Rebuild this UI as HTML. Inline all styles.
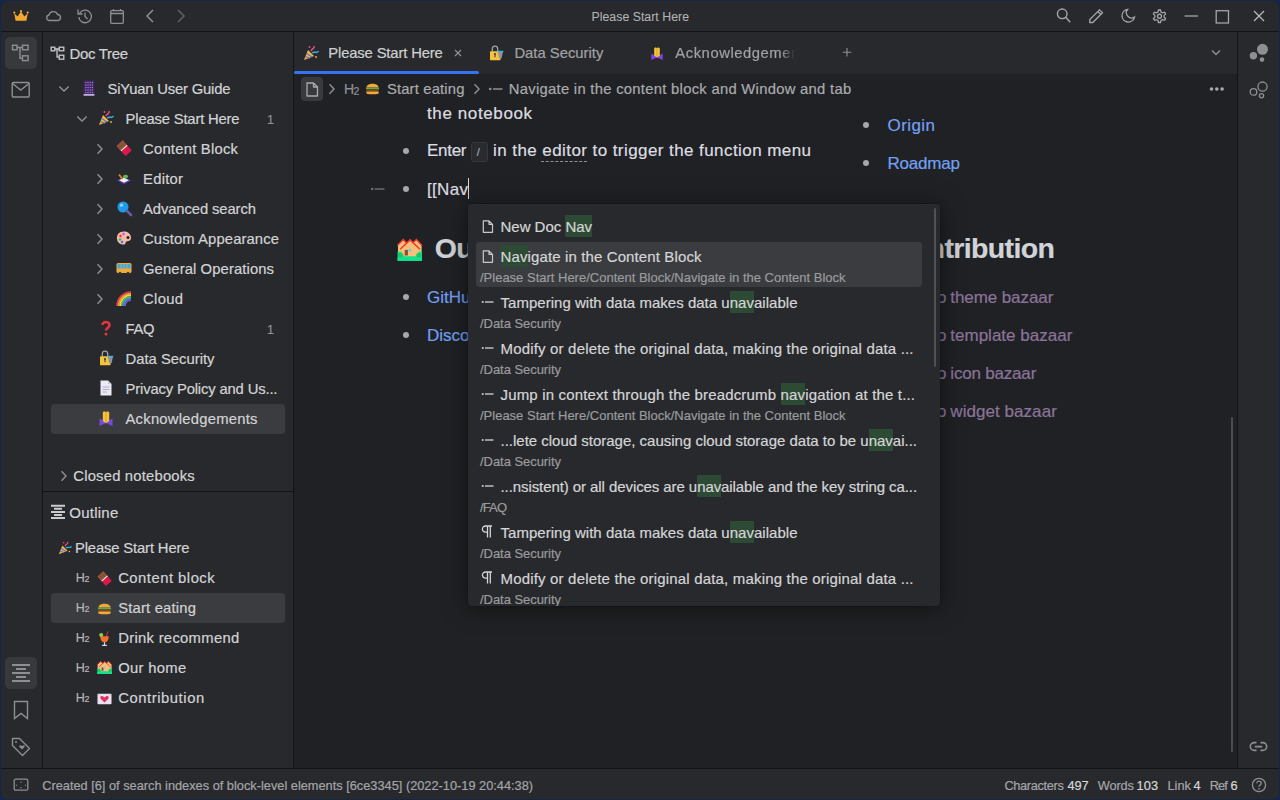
<!DOCTYPE html>
<html><head><meta charset="utf-8"><style>
html,body{margin:0;padding:0;width:1280px;height:800px;overflow:hidden;background:#16254a}
body{position:relative;font-family:"Liberation Sans",sans-serif}
body>*,.p>*{position:absolute}
.t{white-space:pre;-webkit-text-stroke:0.2px currentColor}
svg{overflow:visible}
</style></head><body>
<div style="left:1px;top:1px;width:1278px;height:798px;background:#28292c;border-radius:7px;overflow:hidden"></div>
<div style="left:1px;top:31px;width:1278px;height:1px;background:#141414;border-radius:0px;"></div>
<svg style="left:13px;top:10px;" width="16" height="12" viewBox="0 0 16 12"><path d="M1.2 3.2 L4.6 6.6 L8 1.5 L11.4 6.6 L14.8 3.2 L13.4 10.8 H2.6 Z" fill="#f3a92f"/><circle cx="1.3" cy="2.6" r="1.1" fill="#f3a92f"/><circle cx="8" cy="1.2" r="1.1" fill="#f3a92f"/><circle cx="14.7" cy="2.6" r="1.1" fill="#f3a92f"/></svg>
<svg style="left:45px;top:10px;" width="16" height="12" viewBox="0 0 16 12"><path d="M4 10.5 H12.5 A3 3 0 0 0 12.5 4.5 A4.5 4.5 0 0 0 4 5 A2.8 2.8 0 0 0 4 10.5 Z" fill="none" stroke="#8d8f93" stroke-width="1.3"/></svg>
<svg style="left:77px;top:8px;" width="16" height="16" viewBox="0 0 16 16"><path d="M2.5 5.5 A6.3 6.3 0 1 1 1.8 9" fill="none" stroke="#8d8f93" stroke-width="1.3"/><path d="M1 1.5 V6 H5.5" fill="none" stroke="#8d8f93" stroke-width="1.3"/><path d="M8 4.5 V8.5 L10.5 11" fill="none" stroke="#8d8f93" stroke-width="1.3"/></svg>
<svg style="left:109px;top:8px;" width="16" height="16" viewBox="0 0 16 16"><rect x="1.7" y="2.7" width="12.6" height="12.6" rx="1" fill="none" stroke="#8d8f93" stroke-width="1.3"/><path d="M1.7 5.5 H14.3 M4.5 1 V3 M11.5 1 V3" stroke="#8d8f93" stroke-width="1.3"/></svg>
<svg style="left:144px;top:8px;" width="12" height="16" viewBox="0 0 12 16"><path d="M9 2 L3 8 L9 14" fill="none" stroke="#8d8f93" stroke-width="1.5"/></svg>
<svg style="left:175px;top:8px;" width="12" height="16" viewBox="0 0 12 16"><path d="M3 2 L9 8 L3 14" fill="none" stroke="#5f6165" stroke-width="1.5"/></svg>
<span class="t" style="left:591.50px;top:11.19px;font-size:12.3px;line-height:12.3px;color:#b3b5b9;letter-spacing:0.026px;-webkit-text-stroke:0.05px currentColor">Please Start Here</span>
<svg style="left:1055px;top:8px;" width="18" height="17" viewBox="0 0 18 17"><circle cx="7.2" cy="5.8" r="4.8" fill="none" stroke="#a3a5a8" stroke-width="1.4"/><path d="M10.7 9.3 L15.2 14.2" stroke="#a3a5a8" stroke-width="1.5"/></svg>
<svg style="left:1088px;top:8px;" width="17" height="17" viewBox="0 0 17 17"><path d="M1.8 14.5 L1.8 11.5 L11.5 1.8 L14.5 4.8 L4.8 14.5 Z M9.8 3.5 L12.8 6.5" fill="none" stroke="#a3a5a8" stroke-width="1.3"/></svg>
<svg style="left:1120px;top:8px;" width="17" height="17" viewBox="0 0 17 17"><path d="M7.5 1.5 A6.3 6.3 0 1 0 14.5 9 A5.2 5.2 0 0 1 7.5 1.5 Z" fill="none" stroke="#a3a5a8" stroke-width="1.3"/></svg>
<svg style="left:1152px;top:8.5px;" width="16" height="16" viewBox="0 0 16 16"><g fill="none" stroke="#a3a5a8" stroke-width="1.3"><path d="M6.5 1 H8.5 L9 3 L10.6 3.9 L12.6 3.2 L13.6 4.9 L12.1 6.4 V8.2 L13.6 9.6 L12.6 11.3 L10.6 10.6 L9 11.5 L8.5 13.5 H6.5 L6 11.5 L4.4 10.6 L2.4 11.3 L1.4 9.6 L2.9 8.2 V6.4 L1.4 4.9 L2.4 3.2 L4.4 3.9 L6 3 Z"/><circle cx="7.5" cy="7.25" r="2"/></g></svg>
<svg style="left:1184px;top:8px;" width="16" height="16" viewBox="0 0 16 16"><path d="M0.5 8 H14" stroke="#a3a5a8" stroke-width="1.3"/></svg>
<svg style="left:1215px;top:9px;" width="16" height="15" viewBox="0 0 16 15"><rect x="1.2" y="1.7" width="12.3" height="12.3" fill="none" stroke="#a3a5a8" stroke-width="1.3"/></svg>
<svg style="left:1253px;top:10px;" width="13" height="13" viewBox="0 0 13 13"><path d="M1 1 L11 11 M11 1 L1 11" stroke="#b3b5b8" stroke-width="1.4"/></svg>
<div style="left:42px;top:32px;width:1px;height:736px;background:#141414;border-radius:0px;"></div>
<div style="left:5px;top:37px;width:32px;height:32px;background:#38393c;border-radius:5px;"></div>
<svg style="left:11px;top:44px;" width="20" height="19" viewBox="0 0 20 19"><g fill="none" stroke="#8d8f93" stroke-width="1.4"><rect x="1.5" y="1.3" width="4.5" height="4.5"/><rect x="11.5" y="1.3" width="5.6" height="4.5"/><rect x="11.5" y="11.8" width="5.6" height="4.8"/><path d="M6 3.5 H11.5 M9 3.5 V14.2 H11.5"/></g></svg>
<svg style="left:11px;top:81px;" width="20" height="18" viewBox="0 0 20 18"><rect x="1.2" y="1.5" width="17" height="14.5" rx="1.2" fill="none" stroke="#8d8f93" stroke-width="1.4"/><path d="M1.5 2.5 L9.7 9 L18 2.5" fill="none" stroke="#8d8f93" stroke-width="1.4"/></svg>
<div style="left:5px;top:657px;width:32px;height:32px;background:#38393c;border-radius:5px;"></div>
<svg style="left:11px;top:663px;" width="20" height="20" viewBox="0 0 20 20"><path d="M1 2 H19 M5 6 H15 M1 10 H19 M5 14 H15 M1 18 H19" stroke="#8d8f93" stroke-width="1.8"/></svg>
<svg style="left:13px;top:700px;" width="16" height="21" viewBox="0 0 16 21"><path d="M1.5 1.5 H14.5 V18.5 L8 13.5 L1.5 18.5 Z" fill="none" stroke="#8d8f93" stroke-width="1.4"/></svg>
<svg style="left:11px;top:737px;" width="20" height="20" viewBox="0 0 20 20"><path d="M1.5 1.5 H8.5 L18.5 11.5 L11.5 18.5 L1.5 8.5 Z" fill="none" stroke="#8d8f93" stroke-width="1.4" stroke-linejoin="round"/><circle cx="5" cy="5" r="1" fill="#8d8f93"/><path d="M10.5 9 C9.5 7.5 7.5 8.5 8.5 10 L11 12.5 L13.5 10 C14.5 8.5 12.5 7.5 11.5 9" fill="#8d8f93"/></svg>
<div style="left:293px;top:32px;width:1px;height:736px;background:#141414;border-radius:0px;"></div>
<div style="left:43px;top:491px;width:250px;height:1px;background:#141414;border-radius:0px;"></div>
<svg style="left:50px;top:46px;" width="16" height="15" viewBox="0 0 16 15"><g fill="none" stroke="#c8c9cb" stroke-width="1.3"><rect x="1.2" y="1.2" width="3.6" height="3.6"/><rect x="9.2" y="1.2" width="4.6" height="3.6"/><rect x="9.2" y="9.2" width="4.6" height="4"/><path d="M4.8 3 H9.2 M7 3 V11.2 H9.2"/></g></svg>
<span class="t" style="left:69.50px;top:46.10px;font-size:15px;line-height:15px;color:#d2d3d5;letter-spacing:-0.337px;">Doc Tree</span>
<div style="left:51px;top:404px;width:234px;height:30px;background:#3b3c3f;border-radius:4px;"></div>
<svg style="left:58px;top:84.75px;" width="12" height="8" viewBox="0 0 12 8"><path d="M1.3 1.5 L6 6 L10.7 1.5" fill="none" stroke="#8f9194" stroke-width="1.4"/></svg>
<svg style="left:81px;top:80.25px" width="16" height="16" viewBox="0 0 16 16"><rect x="2.5" y="0.5" width="11" height="14" rx="0.8" fill="#3f2760"/><rect x="2.5" y="14" width="11" height="1.8" rx="0.5" fill="#c5b0e3"/><circle cx="4.8" cy="2.6" r="0.75" fill="#ee4f96"/><circle cx="7.0" cy="2.6" r="0.75" fill="#4f9dff"/><circle cx="9.2" cy="2.6" r="0.75" fill="#ee4f96"/><circle cx="11.4" cy="2.6" r="0.75" fill="#4f9dff"/><circle cx="4.8" cy="5.1" r="0.75" fill="#4f9dff"/><circle cx="7.0" cy="5.1" r="0.75" fill="#ee4f96"/><circle cx="9.2" cy="5.1" r="0.75" fill="#4f9dff"/><circle cx="11.4" cy="5.1" r="0.75" fill="#ee4f96"/><circle cx="4.8" cy="7.6" r="0.75" fill="#ee4f96"/><circle cx="7.0" cy="7.6" r="0.75" fill="#4f9dff"/><circle cx="9.2" cy="7.6" r="0.75" fill="#ee4f96"/><circle cx="11.4" cy="7.6" r="0.75" fill="#4f9dff"/><circle cx="4.8" cy="10.1" r="0.75" fill="#4f9dff"/><circle cx="7.0" cy="10.1" r="0.75" fill="#ee4f96"/><circle cx="9.2" cy="10.1" r="0.75" fill="#4f9dff"/><circle cx="11.4" cy="10.1" r="0.75" fill="#ee4f96"/><circle cx="4.8" cy="12.6" r="0.75" fill="#ee4f96"/><circle cx="7.0" cy="12.6" r="0.75" fill="#4f9dff"/><circle cx="9.2" cy="12.6" r="0.75" fill="#ee4f96"/><circle cx="11.4" cy="12.6" r="0.75" fill="#4f9dff"/></svg>
<span class="t" style="left:107.50px;top:82.22px;font-size:14.8px;line-height:14.8px;color:#d2d3d5;letter-spacing:-0.180px;">SiYuan User Guide</span>
<svg style="left:76px;top:114.75px;" width="12" height="8" viewBox="0 0 12 8"><path d="M1.3 1.5 L6 6 L10.7 1.5" fill="none" stroke="#8f9194" stroke-width="1.4"/></svg>
<svg style="left:97.5px;top:110.25px" width="16" height="16" viewBox="0 0 16 16"><path d="M1 15 L5 5 L11 11 Z" fill="#f3b63f"/><path d="M2.5 11.5 L7 13.5 M3.7 8.5 L9 12" stroke="#5c6ad9" stroke-width="1.2"/><path d="M8 6 C9 3 12 4 11 1" stroke="#e94e8a" stroke-width="1.5" fill="none"/><path d="M9 8 C12 6 14 9 15.5 6" stroke="#3bb0e8" stroke-width="1.5" fill="none"/><circle cx="6.5" cy="2" r="0.9" fill="#e94e8a"/><circle cx="13" cy="12" r="0.9" fill="#f3b63f"/></svg>
<span class="t" style="left:125.60px;top:112.22px;font-size:14.8px;line-height:14.8px;color:#d2d3d5;letter-spacing:-0.176px;">Please Start Here</span>
<span class="t" style="left:267.00px;top:114.17px;font-size:12.5px;line-height:12.5px;color:#8f9194;">1</span>
<svg style="left:96px;top:142.75px;" width="8" height="12" viewBox="0 0 8 12"><path d="M1.5 1.3 L6 6 L1.5 10.7" fill="none" stroke="#8f9194" stroke-width="1.4"/></svg>
<svg style="left:116px;top:140.25px" width="16" height="16" viewBox="0 0 16 16"><g transform="rotate(-42 8 8)"><rect x="3.8" y="1.5" width="8.4" height="13.5" rx="0.8" fill="#d8194a"/><rect x="3.8" y="1.5" width="8.4" height="6.3" fill="#8e5a3a"/><path d="M6.6 1.5 V7.8 M9.4 1.5 V7.8 M3.8 4.6 H12.2" stroke="#6e4028" stroke-width="0.5"/><rect x="3.8" y="7.6" width="8.4" height="1.1" fill="#f2f2f2"/></g></svg>
<span class="t" style="left:143.00px;top:142.22px;font-size:14.8px;line-height:14.8px;color:#d2d3d5;letter-spacing:0.238px;">Content Block</span>
<svg style="left:96px;top:172.75px;" width="8" height="12" viewBox="0 0 8 12"><path d="M1.5 1.3 L6 6 L1.5 10.7" fill="none" stroke="#8f9194" stroke-width="1.4"/></svg>
<svg style="left:116px;top:170.25px" width="16" height="16" viewBox="0 0 16 16"><path d="M0.5 10.5 L8 14.5 L15.5 10.5 L15.5 12 L8 16 L0.5 12 Z" fill="#2b1f4a"/><path d="M0.5 10.5 L8 6.5 L15.5 10.5 L8 14.5 Z" fill="#4b3a86"/><path d="M3 10.3 L8 7.8 L13 10.3 L8 12.8 Z" fill="#f0f0f4"/><ellipse cx="9.5" cy="6.5" rx="2.6" ry="1.8" fill="#5ebd4b"/><path d="M3 4.5 L6.5 9" stroke="#f07a2f" stroke-width="1.8"/></svg>
<span class="t" style="left:143.00px;top:172.22px;font-size:14.8px;line-height:14.8px;color:#d2d3d5;letter-spacing:0.268px;">Editor</span>
<svg style="left:96px;top:202.75px;" width="8" height="12" viewBox="0 0 8 12"><path d="M1.5 1.3 L6 6 L1.5 10.7" fill="none" stroke="#8f9194" stroke-width="1.4"/></svg>
<svg style="left:116px;top:200.25px" width="16" height="16" viewBox="0 0 16 16"><circle cx="7" cy="7" r="5.5" fill="#1e9be8"/><circle cx="5.5" cy="5.2" r="1.6" fill="#8fd3ff"/><path d="M11 11 L15 15" stroke="#6a5aa8" stroke-width="2.5" stroke-linecap="round"/></svg>
<span class="t" style="left:143.00px;top:202.22px;font-size:14.8px;line-height:14.8px;color:#d2d3d5;letter-spacing:-0.097px;">Advanced search</span>
<svg style="left:96px;top:232.75px;" width="8" height="12" viewBox="0 0 8 12"><path d="M1.5 1.3 L6 6 L1.5 10.7" fill="none" stroke="#8f9194" stroke-width="1.4"/></svg>
<svg style="left:116px;top:230.25px" width="16" height="16" viewBox="0 0 16 16"><path d="M8 1.5 C3 1.5 0.5 5 1 9 C1.5 13 5 15 8.5 14.5 C10 14 9 12 10.5 11.5 C13 11 15.5 10.5 15 7 C14.5 3.5 11.5 1.5 8 1.5 Z" fill="#f4b9a9"/><circle cx="4.5" cy="6" r="1.2" fill="#e33"/><circle cx="7.5" cy="4" r="1.2" fill="#a55ee0"/><circle cx="4" cy="9.5" r="1.2" fill="#2bb36b"/><circle cx="6" cy="12" r="1.2" fill="#3a6ef0"/><circle cx="12" cy="7.5" r="1.5" fill="#222"/></svg>
<span class="t" style="left:143.00px;top:232.22px;font-size:14.8px;line-height:14.8px;color:#d2d3d5;letter-spacing:0.118px;">Custom Appearance</span>
<svg style="left:96px;top:262.75px;" width="8" height="12" viewBox="0 0 8 12"><path d="M1.5 1.3 L6 6 L1.5 10.7" fill="none" stroke="#8f9194" stroke-width="1.4"/></svg>
<svg style="left:116px;top:260.25px" width="16" height="16" viewBox="0 0 16 16"><rect x="0.5" y="3" width="15" height="10" rx="1.5" fill="#f2a93b"/><rect x="1.5" y="4" width="13" height="4.5" fill="#3aa9e8"/><path d="M5 4 V8.5 M8 4 V8.5 M11 4 V8.5" stroke="#f2a93b" stroke-width="0.8"/><circle cx="4" cy="13.2" r="1.5" fill="#333"/><circle cx="12" cy="13.2" r="1.5" fill="#333"/></svg>
<span class="t" style="left:143.00px;top:262.22px;font-size:14.8px;line-height:14.8px;color:#d2d3d5;letter-spacing:0.108px;">General Operations</span>
<svg style="left:96px;top:292.75px;" width="8" height="12" viewBox="0 0 8 12"><path d="M1.5 1.3 L6 6 L1.5 10.7" fill="none" stroke="#8f9194" stroke-width="1.4"/></svg>
<svg style="left:116px;top:290.25px" width="16" height="16" viewBox="0 0 16 16"><path d="M1.0 16 A14.0 14.0 0 0 1 15 2.0" stroke="#e8384f" stroke-width="1.7" fill="none"/><path d="M2.6 16 A12.4 12.4 0 0 1 15 3.6" stroke="#f29b38" stroke-width="1.7" fill="none"/><path d="M4.2 16 A10.8 10.8 0 0 1 15 5.2" stroke="#f5d63d" stroke-width="1.7" fill="none"/><path d="M5.800000000000001 16 A9.2 9.2 0 0 1 15 6.800000000000001" stroke="#4fc15b" stroke-width="1.7" fill="none"/><path d="M7.4 16 A7.6 7.6 0 0 1 15 8.4" stroke="#3a8ee8" stroke-width="1.7" fill="none"/><path d="M9.0 16 A6.0 6.0 0 0 1 15 10.0" stroke="#7b5ac8" stroke-width="1.7" fill="none"/></svg>
<span class="t" style="left:143.00px;top:292.22px;font-size:14.8px;line-height:14.8px;color:#d2d3d5;letter-spacing:0.333px;">Cloud</span>
<svg style="left:98px;top:320.25px" width="16" height="16" viewBox="0 0 16 16"><path d="M4.5 5 C4.5 1 11.5 1 11.5 5 C11.5 8 8 8 8 10.5" stroke="#e3343f" stroke-width="2.6" fill="none"/><circle cx="8" cy="14" r="1.5" fill="#e3343f"/></svg>
<span class="t" style="left:125.50px;top:322.22px;font-size:14.8px;line-height:14.8px;color:#d2d3d5;letter-spacing:-0.304px;">FAQ</span>
<span class="t" style="left:267.00px;top:324.17px;font-size:12.5px;line-height:12.5px;color:#8f9194;">1</span>
<svg style="left:98px;top:350.25px" width="16" height="16" viewBox="0 0 16 16"><path d="M4.3 6.5 V3.8 A2.7 2.7 0 0 1 9.7 3.8 V6.5" stroke="#a0a2a6" stroke-width="1.3" fill="none"/><rect x="2" y="6.2" width="10.5" height="9" rx="0.6" fill="#f5c33b"/><rect x="6.4" y="8.6" width="1.2" height="3.6" fill="#5a4630"/><circle cx="7" cy="8.9" r="0.9" fill="#2a2f8a"/><path d="M9.8 6.3 H15 L13.8 12.5 L12.4 14.2 L11 12.5 Z" fill="#8f9296"/><rect x="9.5" y="5.8" width="5.8" height="1.3" fill="#35b6f0"/></svg>
<span class="t" style="left:125.50px;top:352.22px;font-size:14.8px;line-height:14.8px;color:#d2d3d5;letter-spacing:0.014px;">Data Security</span>
<svg style="left:98px;top:380.25px" width="16" height="16" viewBox="0 0 16 16"><path d="M2.5 0.5 H10 L13.5 4 V15.5 H2.5 Z" fill="#eceaf4"/><path d="M10 0.5 V4 H13.5" fill="#c5c3d6"/><path d="M4.5 7 H11.5 M4.5 9.5 H11.5 M4.5 12 H9" stroke="#aaa8bb" stroke-width="0.9"/></svg>
<span class="t" style="left:125.50px;top:382.22px;font-size:14.8px;line-height:14.8px;color:#d2d3d5;letter-spacing:-0.150px;">Privacy Policy and Us...</span>
<svg style="left:98px;top:410.25px" width="16" height="16" viewBox="0 0 16 16"><path d="M1.5 8.5 L8 12.3 L14.5 8.5 V16 L8 13 L1.5 16 Z" fill="#7a46e6"/><path d="M4.8 11 V3 C4.8 1.2 7.6 1.2 8 2.6 C8.4 1.2 11.2 1.2 11.2 3 V11 L8 13.2 Z" fill="#f5c53a"/><path d="M8 2.6 V12.8" stroke="#d99a1e" stroke-width="0.9"/></svg>
<span class="t" style="left:125.50px;top:412.22px;font-size:14.8px;line-height:14.8px;color:#d2d3d5;letter-spacing:0.244px;">Acknowledgements</span>
<svg style="left:59.5px;top:470px;" width="8" height="12" viewBox="0 0 8 12"><path d="M1.5 1.3 L6 6 L1.5 10.7" fill="none" stroke="#8f9194" stroke-width="1.4"/></svg>
<span class="t" style="left:73.30px;top:468.97px;font-size:14.8px;line-height:14.8px;color:#d2d3d5;letter-spacing:0.201px;">Closed notebooks</span>
<svg style="left:50px;top:504px;" width="16" height="16" viewBox="0 0 16 16"><path d="M1 1.85 H15 M4 4.85 H12 M1 8 H15 M4 11 H12 M1 14 H15" stroke="#c8cbd0" stroke-width="2"/></svg>
<span class="t" style="left:69.30px;top:504.80px;font-size:15px;line-height:15px;color:#d2d3d5;letter-spacing:0.245px;">Outline</span>
<svg style="left:58px;top:541px" width="14" height="14" viewBox="0 0 16 16"><path d="M1 15 L5 5 L11 11 Z" fill="#f3b63f"/><path d="M2.5 11.5 L7 13.5 M3.7 8.5 L9 12" stroke="#5c6ad9" stroke-width="1.2"/><path d="M8 6 C9 3 12 4 11 1" stroke="#e94e8a" stroke-width="1.5" fill="none"/><path d="M9 8 C12 6 14 9 15.5 6" stroke="#3bb0e8" stroke-width="1.5" fill="none"/><circle cx="6.5" cy="2" r="0.9" fill="#e94e8a"/><circle cx="13" cy="12" r="0.9" fill="#f3b63f"/></svg>
<span class="t" style="left:75.00px;top:541.17px;font-size:14.8px;line-height:14.8px;color:#d2d3d5;letter-spacing:-0.144px;">Please Start Here</span>
<div style="left:51px;top:593px;width:234px;height:30px;background:#3b3c3f;border-radius:4px;"></div>
<span class="t" style="left:75.80px;top:572.02px;font-size:12.5px;line-height:12.5px;color:#b4b6b9;">H</span>
<span class="t" style="left:84.50px;top:574.98px;font-size:9px;line-height:9px;color:#b4b6b9;">2</span>
<svg style="left:97px;top:571.1px" width="15" height="15" viewBox="0 0 16 16"><g transform="rotate(-42 8 8)"><rect x="3.8" y="1.5" width="8.4" height="13.5" rx="0.8" fill="#d8194a"/><rect x="3.8" y="1.5" width="8.4" height="6.3" fill="#8e5a3a"/><path d="M6.6 1.5 V7.8 M9.4 1.5 V7.8 M3.8 4.6 H12.2" stroke="#6e4028" stroke-width="0.5"/><rect x="3.8" y="7.6" width="8.4" height="1.1" fill="#f2f2f2"/></g></svg>
<span class="t" style="left:118.20px;top:571.07px;font-size:14.8px;line-height:14.8px;color:#d2d3d5;letter-spacing:0.500px;">Content block</span>
<span class="t" style="left:75.80px;top:602.02px;font-size:12.5px;line-height:12.5px;color:#b4b6b9;">H</span>
<span class="t" style="left:84.50px;top:604.98px;font-size:9px;line-height:9px;color:#b4b6b9;">2</span>
<svg style="left:97px;top:601.1px" width="15" height="15" viewBox="0 0 16 16"><path d="M1.5 7 C1.5 1.5 14.5 1.5 14.5 7 Z" fill="#f2a93b"/><rect x="1" y="7" width="14" height="2" fill="#5bb03c"/><rect x="1.5" y="9" width="13" height="2.2" fill="#8a3d1f"/><path d="M1.5 11.2 H14.5 V13 C14.5 14.5 1.5 14.5 1.5 13 Z" fill="#f2a93b"/></svg>
<span class="t" style="left:118.20px;top:601.07px;font-size:14.8px;line-height:14.8px;color:#d2d3d5;letter-spacing:0.183px;">Start eating</span>
<span class="t" style="left:75.80px;top:632.02px;font-size:12.5px;line-height:12.5px;color:#b4b6b9;">H</span>
<span class="t" style="left:84.50px;top:634.98px;font-size:9px;line-height:9px;color:#b4b6b9;">2</span>
<svg style="left:97px;top:631.1px" width="15" height="15" viewBox="0 0 16 16"><path d="M12 0.5 L9.5 6" stroke="#e8384f" stroke-width="1"/><path d="M3.5 5.5 H12.5 C12.5 10 10.5 12 8 12 C5.5 12 3.5 10 3.5 5.5 Z" fill="#f3702f"/><path d="M8 12 V15 M5.5 15.3 H10.5" stroke="#d9dde3" stroke-width="1.2"/><circle cx="4.5" cy="4.2" r="2.2" fill="#8fd14f"/></svg>
<span class="t" style="left:118.20px;top:631.07px;font-size:14.8px;line-height:14.8px;color:#d2d3d5;letter-spacing:0.301px;">Drink recommend</span>
<span class="t" style="left:75.80px;top:662.02px;font-size:12.5px;line-height:12.5px;color:#b4b6b9;">H</span>
<span class="t" style="left:84.50px;top:664.98px;font-size:9px;line-height:9px;color:#b4b6b9;">2</span>
<svg style="left:97px;top:661.1px" width="15" height="13.04" viewBox="0 0 25.3 22"><path d="M1 6.2 L6.2 0.8 L9.5 4 V14 H1 Z M16 4 L19.4 0.8 L24.6 6.2 V14 H16 Z" fill="#f2c27c"/><path d="M0.4 6.4 L6.2 0.6 L9.2 3.6 M16.2 3.6 L19.4 0.6 L25 6.4" stroke="#f2382f" stroke-width="1.4" fill="none"/><rect x="0.6" y="12.6" width="24.4" height="9.2" fill="#10e38c"/><path d="M4.6 9.2 L13.1 1.2 L21.6 9.2 V17.2 H4.6 Z" fill="#f4c07a"/><path d="M3.2 10.2 L13.1 0.9 L23 10.2" stroke="#f2382f" stroke-width="1.5" fill="none"/><rect x="7.7" y="10.9" width="3.2" height="5.6" fill="#8a5033"/><rect x="11.6" y="9.8" width="2.5" height="2.8" fill="#7cc4f4"/><circle cx="3.8" cy="16.3" r="2.6" fill="#1fc768"/><circle cx="21.8" cy="16.3" r="2.6" fill="#1fc768"/><rect x="0.6" y="18.4" width="24.4" height="3.4" fill="#10e38c"/></svg>
<span class="t" style="left:118.20px;top:661.07px;font-size:14.8px;line-height:14.8px;color:#d2d3d5;letter-spacing:0.314px;">Our home</span>
<span class="t" style="left:75.80px;top:692.02px;font-size:12.5px;line-height:12.5px;color:#b4b6b9;">H</span>
<span class="t" style="left:84.50px;top:694.98px;font-size:9px;line-height:9px;color:#b4b6b9;">2</span>
<svg style="left:97px;top:691.1px" width="15" height="15" viewBox="0 0 16 16"><rect x="0.5" y="3" width="15" height="11" rx="1" fill="#e9e1f1"/><path d="M0.8 3.5 L8 9 L15.2 3.5" stroke="#c9bfd6" stroke-width="0.6" fill="none"/><path d="M8 12.3 L4.2 8.6 C2.6 7 4.2 4.6 6.2 5.5 L8 7 L9.8 5.5 C11.8 4.6 13.4 7 11.8 8.6 Z" fill="#e6305c"/></svg>
<span class="t" style="left:118.20px;top:691.07px;font-size:14.8px;line-height:14.8px;color:#d2d3d5;letter-spacing:0.563px;">Contribution</span>
<div style="left:294px;top:32px;width:944px;height:42px;background:#28292c;border-radius:0px;"></div>
<svg style="left:302.5px;top:45px" width="16" height="16" viewBox="0 0 16 16"><path d="M1 15 L5 5 L11 11 Z" fill="#f3b63f"/><path d="M2.5 11.5 L7 13.5 M3.7 8.5 L9 12" stroke="#5c6ad9" stroke-width="1.2"/><path d="M8 6 C9 3 12 4 11 1" stroke="#e94e8a" stroke-width="1.5" fill="none"/><path d="M9 8 C12 6 14 9 15.5 6" stroke="#3bb0e8" stroke-width="1.5" fill="none"/><circle cx="6.5" cy="2" r="0.9" fill="#e94e8a"/><circle cx="13" cy="12" r="0.9" fill="#f3b63f"/></svg>
<span class="t" style="left:328.30px;top:45.67px;font-size:14.8px;line-height:14.8px;color:#cfd0d2;letter-spacing:-0.144px;">Please Start Here</span>
<svg style="left:453px;top:48px;" width="10" height="10" viewBox="0 0 10 10"><path d="M2 2 L8 8 M8 2 L2 8" stroke="#8f9194" stroke-width="1.2"/></svg>
<div style="left:294px;top:71px;width:185px;height:3px;background:#3573f0;border-radius:2px;"></div>
<svg style="left:488px;top:45px" width="16" height="16" viewBox="0 0 16 16"><path d="M4.3 6.5 V3.8 A2.7 2.7 0 0 1 9.7 3.8 V6.5" stroke="#a0a2a6" stroke-width="1.3" fill="none"/><rect x="2" y="6.2" width="10.5" height="9" rx="0.6" fill="#f5c33b"/><rect x="6.4" y="8.6" width="1.2" height="3.6" fill="#5a4630"/><circle cx="7" cy="8.9" r="0.9" fill="#2a2f8a"/><path d="M9.8 6.3 H15 L13.8 12.5 L12.4 14.2 L11 12.5 Z" fill="#8f9296"/><rect x="9.5" y="5.8" width="5.8" height="1.3" fill="#35b6f0"/></svg>
<span class="t" style="left:514.40px;top:45.97px;font-size:14.8px;line-height:14.8px;color:#a0a2a5;letter-spacing:0.014px;">Data Security</span>
<svg style="left:650px;top:45.5px" width="14" height="14" viewBox="0 0 16 16"><path d="M1.5 8.5 L8 12.3 L14.5 8.5 V16 L8 13 L1.5 16 Z" fill="#7a46e6"/><path d="M4.8 11 V3 C4.8 1.2 7.6 1.2 8 2.6 C8.4 1.2 11.2 1.2 11.2 3 V11 L8 13.2 Z" fill="#f5c53a"/><path d="M8 2.6 V12.8" stroke="#d99a1e" stroke-width="0.9"/></svg>
<span class="t" style="left:675.3px;top:45.97px;font-size:14.8px;line-height:14.8px;color:#a0a2a5;letter-spacing:0.55px;width:120px;overflow:hidden;-webkit-mask-image:linear-gradient(90deg,#000 88%,transparent 100%)">Acknowledgements</span>
<svg style="left:842px;top:47px;" width="10" height="10" viewBox="0 0 10 10"><path d="M5 1 V9.5 M0.8 5.2 H9.3" stroke="#8f9194" stroke-width="1.1"/></svg>
<svg style="left:1210px;top:48px;" width="12" height="10" viewBox="0 0 12 10"><path d="M2 2.5 L6 6.5 L10 2.5" fill="none" stroke="#8f9194" stroke-width="1.4"/></svg>
<div style="left:294px;top:74px;width:944px;height:694px;background:#202124;border-radius:0px;"></div>
<div style="left:301px;top:77px;width:22px;height:24px;background:#393a3d;border-radius:4px;"></div>
<svg style="left:305px;top:82px;" width="14" height="15" viewBox="0 0 14 15"><path d="M2 1 H8.5 L12.5 5 V14 H2 Z M8.5 1 V5 H12.5" fill="none" stroke="#a9abae" stroke-width="1.3" stroke-linejoin="round"/></svg>
<svg style="left:328px;top:83px;" width="8" height="12" viewBox="0 0 8 12"><path d="M1.5 1.3 L6 6 L1.5 10.7" fill="none" stroke="#8f9194" stroke-width="1.4"/></svg>
<span class="t" style="left:344.00px;top:82.35px;font-size:14px;line-height:14px;color:#8f9194;">H</span>
<span class="t" style="left:353.50px;top:85.61px;font-size:10.5px;line-height:10.5px;color:#8f9194;">2</span>
<svg style="left:365px;top:81px" width="15" height="15" viewBox="0 0 16 16"><path d="M1.5 7 C1.5 1.5 14.5 1.5 14.5 7 Z" fill="#f2a93b"/><rect x="1" y="7" width="14" height="2" fill="#5bb03c"/><rect x="1.5" y="9" width="13" height="2.2" fill="#8a3d1f"/><path d="M1.5 11.2 H14.5 V13 C14.5 14.5 1.5 14.5 1.5 13 Z" fill="#f2a93b"/></svg>
<span class="t" style="left:386.90px;top:81.67px;font-size:14.8px;line-height:14.8px;color:#a9abae;letter-spacing:0.164px;">Start eating</span>
<svg style="left:473px;top:83px;" width="8" height="12" viewBox="0 0 8 12"><path d="M1.5 1.3 L6 6 L1.5 10.7" fill="none" stroke="#8f9194" stroke-width="1.4"/></svg>
<svg style="left:488px;top:84px;" width="16" height="10" viewBox="0 0 16 10"><circle cx="2.2" cy="5" r="1.3" fill="#8f9194"/><path d="M5 5 H14.5" stroke="#8f9194" stroke-width="1.5"/></svg>
<span class="t" style="left:508.75px;top:81.67px;font-size:14.8px;line-height:14.8px;color:#a9abae;letter-spacing:0.285px;">Navigate in the content block and Window and tab</span>
<svg style="left:1208px;top:84px;" width="18" height="10" viewBox="0 0 18 10"><circle cx="3.5" cy="5" r="1.8" fill="#a7abb0"/><circle cx="8.8" cy="5" r="1.8" fill="#a7abb0"/><circle cx="14.1" cy="5" r="1.8" fill="#a7abb0"/></svg>
<span class="t" style="left:427.00px;top:105.11px;font-size:17px;line-height:17px;color:#dcdde0;letter-spacing:0.609px;">the notebook</span>
<div style="left:402.5px;top:148.3px;width:6px;height:6px;border-radius:3px;background:#a5a7aa"></div>
<span class="t" style="left:427.00px;top:142.41px;font-size:17px;line-height:17px;color:#dcdde0;letter-spacing:-0.283px;">Enter</span>
<div style="left:471px;top:142px;width:17px;height:20px;background:#2a2b2e;border-radius:3px;border:1px solid #38393c;box-sizing:border-box"></div>
<span class="t" style="left:476.80px;top:147.49px;font-size:11px;line-height:11px;color:#9aabbf;">/</span>
<span class="t" style="left:493.00px;top:142.41px;font-size:17px;line-height:17px;color:#dcdde0;letter-spacing:0.426px;">in the editor to trigger the function menu</span>
<div style="left:541px;top:161px;width:46px;height:0;border-top:1px dashed #8f9194"></div>
<svg style="left:370px;top:184px;" width="16" height="10" viewBox="0 0 16 10"><circle cx="2.2" cy="5" r="1.2" fill="#6d6f72"/><path d="M4.5 5 H14.5" stroke="#6d6f72" stroke-width="1.4"/></svg>
<div style="left:402.5px;top:185.8px;width:6px;height:6px;border-radius:3px;background:#a5a7aa"></div>
<span class="t" style="left:427.00px;top:180.91px;font-size:17px;line-height:17px;color:#dcdde0;letter-spacing:0.331px;">[[Nav</span>
<div style="left:467.5px;top:178px;width:1.3px;height:21px;background:#d6d7d9;border-radius:0px;"></div>
<svg style="left:397.2px;top:238.7px" width="25.3" height="22.00" viewBox="0 0 25.3 22"><path d="M1 6.2 L6.2 0.8 L9.5 4 V14 H1 Z M16 4 L19.4 0.8 L24.6 6.2 V14 H16 Z" fill="#f2c27c"/><path d="M0.4 6.4 L6.2 0.6 L9.2 3.6 M16.2 3.6 L19.4 0.6 L25 6.4" stroke="#f2382f" stroke-width="1.4" fill="none"/><rect x="0.6" y="12.6" width="24.4" height="9.2" fill="#10e38c"/><path d="M4.6 9.2 L13.1 1.2 L21.6 9.2 V17.2 H4.6 Z" fill="#f4c07a"/><path d="M3.2 10.2 L13.1 0.9 L23 10.2" stroke="#f2382f" stroke-width="1.5" fill="none"/><rect x="7.7" y="10.9" width="3.2" height="5.6" fill="#8a5033"/><rect x="11.6" y="9.8" width="2.5" height="2.8" fill="#7cc4f4"/><circle cx="3.8" cy="16.3" r="2.6" fill="#1fc768"/><circle cx="21.8" cy="16.3" r="2.6" fill="#1fc768"/><rect x="0.6" y="18.4" width="24.4" height="3.4" fill="#10e38c"/></svg>
<span class="t" style="left:434.80px;top:234.47px;font-size:28.5px;line-height:28.5px;color:#d0d3d8;font-weight:bold;letter-spacing:-0.6px">Our home</span>
<div style="left:403px;top:294px;width:6px;height:6px;border-radius:3px;background:#a5a7aa"></div>
<span class="t" style="left:427.00px;top:288.91px;font-size:17px;line-height:17px;color:#72a0f2;">GitHub</span>
<div style="left:403px;top:332px;width:6px;height:6px;border-radius:3px;background:#a5a7aa"></div>
<span class="t" style="left:427.00px;top:326.91px;font-size:17px;line-height:17px;color:#72a0f2;">Discord</span>
<div style="left:863px;top:122px;width:6px;height:6px;border-radius:3px;background:#a5a7aa"></div>
<span class="t" style="left:887.50px;top:116.91px;font-size:17px;line-height:17px;color:#72a0f2;letter-spacing:0.431px;">Origin</span>
<div style="left:863px;top:160px;width:6px;height:6px;border-radius:3px;background:#a5a7aa"></div>
<span class="t" style="left:887.50px;top:154.91px;font-size:17px;line-height:17px;color:#72a0f2;letter-spacing:-0.202px;">Roadmap</span>
<span class="t" style="left:890.83px;top:234.47px;font-size:28.5px;line-height:28.5px;color:#d0d3d8;font-weight:bold;letter-spacing:-0.616px">Contribution</span>
<span class="t" style="left:937.00px;top:289.11px;font-size:17px;line-height:17px;color:#8a7499;">o</span>
<span class="t" style="left:950.30px;top:289.11px;font-size:17px;line-height:17px;color:#8a7499;letter-spacing:-0.086px;">theme bazaar</span>
<span class="t" style="left:937.00px;top:327.11px;font-size:17px;line-height:17px;color:#8a7499;">o</span>
<span class="t" style="left:950.30px;top:327.11px;font-size:17px;line-height:17px;color:#8a7499;letter-spacing:0.007px;">template bazaar</span>
<span class="t" style="left:937.00px;top:365.11px;font-size:17px;line-height:17px;color:#8a7499;">o</span>
<span class="t" style="left:950.30px;top:365.11px;font-size:17px;line-height:17px;color:#8a7499;letter-spacing:-0.189px;">icon bazaar</span>
<span class="t" style="left:937.00px;top:403.11px;font-size:17px;line-height:17px;color:#8a7499;">o</span>
<span class="t" style="left:950.30px;top:403.11px;font-size:17px;line-height:17px;color:#8a7499;letter-spacing:0.055px;">widget bazaar</span>
<div style="left:1231px;top:417px;width:2px;height:335px;background:#4b4c4f;border-radius:1px;"></div>
<div style="left:1237px;top:32px;width:1px;height:736px;background:#141414;border-radius:0px;"></div>
<svg style="left:1248px;top:42px;" width="22" height="22" viewBox="0 0 22 22"><circle cx="14.5" cy="7.3" r="5.5" fill="#8d8f93"/><circle cx="5.4" cy="13.7" r="3.7" fill="#8d8f93"/><circle cx="14" cy="17.6" r="2.3" fill="#8d8f93"/></svg>
<svg style="left:1248px;top:80px;" width="22" height="22" viewBox="0 0 22 22"><g fill="none" stroke="#8d8f93" stroke-width="1.3"><circle cx="14.5" cy="6.6" r="4.6"/><circle cx="5.5" cy="11.9" r="3.3"/><circle cx="13.5" cy="15.8" r="2.1"/></g></svg>
<svg style="left:1249px;top:741px;" width="20" height="12" viewBox="0 0 20 12"><g fill="none" stroke="#8d8f93" stroke-width="1.6"><path d="M7.5 1.6 H5.2 A3.9 3.9 0 0 0 5.2 9.4 H7.5 M11.5 1.6 H13.8 A3.9 3.9 0 0 1 13.8 9.4 H11.5 M5.8 5.6 H13.2"/></g></svg>
<div style="left:1px;top:768px;width:1278px;height:1px;background:#141414;border-radius:0px;"></div>
<svg style="left:13px;top:778px;" width="16" height="14" viewBox="0 0 16 14"><rect x="1.2" y="1.2" width="13.6" height="11" rx="1.5" fill="none" stroke="#8d8f93" stroke-width="1.3"/><path d="M8 3.5 V4.7 M8 9 V10.2 M3.5 6.7 V7.7 M12.5 6.7 V7.7" stroke="#8d8f93" stroke-width="1.2"/></svg>
<span class="t" style="left:42.20px;top:779.96px;font-size:12.8px;line-height:12.8px;color:#a3a5a8;letter-spacing:-0.008px;">Created [6] of search indexes of block-level elements [6ce3345] (2022-10-19 20:44:38)</span>
<span class="t" style="left:1004.40px;top:780.16px;font-size:12.8px;line-height:12.8px;color:#a3a5a8;letter-spacing:-0.344px;">Characters</span>
<span class="t" style="left:1067.50px;top:780.16px;font-size:12.8px;line-height:12.8px;color:#d6d7d9;letter-spacing:-0.178px;">497</span>
<span class="t" style="left:1097.80px;top:780.16px;font-size:12.8px;line-height:12.8px;color:#a3a5a8;letter-spacing:-0.188px;">Words</span>
<span class="t" style="left:1136.50px;top:780.16px;font-size:12.8px;line-height:12.8px;color:#d6d7d9;letter-spacing:0.072px;">103</span>
<span class="t" style="left:1167.50px;top:780.16px;font-size:12.8px;line-height:12.8px;color:#a3a5a8;letter-spacing:0.006px;">Link</span>
<span class="t" style="left:1193.50px;top:780.16px;font-size:12.8px;line-height:12.8px;color:#d6d7d9;">4</span>
<span class="t" style="left:1209.70px;top:780.16px;font-size:12.8px;line-height:12.8px;color:#a3a5a8;letter-spacing:-0.959px;">Ref</span>
<span class="t" style="left:1230.50px;top:780.16px;font-size:12.8px;line-height:12.8px;color:#d6d7d9;">6</span>
<svg style="left:1251px;top:777px;" width="16" height="16" viewBox="0 0 16 16"><circle cx="8" cy="8" r="6.6" fill="none" stroke="#8d8f93" stroke-width="1.3"/><path d="M5.8 6.2 C5.8 3.5 10.2 3.5 10.2 6.2 C10.2 8 8 8 8 9.8" fill="none" stroke="#8d8f93" stroke-width="1.3"/><circle cx="8" cy="11.8" r="0.9" fill="#8d8f93"/></svg>
<div class="p" style="left:468px;top:204px;width:472px;height:402px;background:#28292c;border-radius:4px;overflow:hidden;box-shadow:0 0 0 1px rgba(0,0,0,.12),0 2px 24px rgba(0,0,0,.5)">
<div style="left:8px;top:38px;width:446px;height:45px;background:#3b3c3f;border-radius:4px;"></div>
<div style="left:466px;top:3.5px;width:2px;height:159.5px;background:#505154;border-radius:1px;"></div>
<svg style="left:14px;top:16px;" width="12" height="14" viewBox="0 0 12 14"><path d="M1.3 0.8 H7 L10.5 4.3 V12.3 H1.3 Z M7 0.8 V4.3 H10.5" fill="none" stroke="#c8c9cb" stroke-width="1.2" stroke-linejoin="round"/></svg>
<span class="t" style="left:32.5px;top:15.30px;font-size:15px;line-height:15px;color:#d4d5d7;letter-spacing:-0.019px">New Doc <span style="background:#2d4a34;padding:3px 0 2px">Nav</span></span>
<svg style="left:14px;top:46px;" width="12" height="14" viewBox="0 0 12 14"><path d="M1.3 0.8 H7 L10.5 4.3 V12.3 H1.3 Z M7 0.8 V4.3 H10.5" fill="none" stroke="#c8c9cb" stroke-width="1.2" stroke-linejoin="round"/></svg>
<span class="t" style="left:32.5px;top:44.90px;font-size:15px;line-height:15px;color:#d4d5d7;letter-spacing:0.121px"><span style="background:#2d4a34;padding:3px 0 2px">Nav</span>igate in the Content Block</span>
<span class="t" style="left:12.00px;top:66.50px;font-size:13px;line-height:13px;color:#999b9e;letter-spacing:-0.002px;">/Please Start Here/Content Block/Navigate in the Content Block</span>
<svg style="left:13px;top:94.39999999999998px;" width="14" height="8" viewBox="0 0 14 8"><circle cx="1.8" cy="4" r="1.1" fill="#c8c9cb"/><path d="M4 4 H12.5" stroke="#c8c9cb" stroke-width="1.4"/></svg>
<span class="t" style="left:32.5px;top:90.70px;font-size:15px;line-height:15px;color:#d4d5d7;letter-spacing:0.024px">Tampering with data makes data u<span style="background:#2d4a34;padding:3px 0 2px">nav</span>ailable</span>
<span class="t" style="left:12.00px;top:112.70px;font-size:13px;line-height:13px;color:#999b9e;letter-spacing:-0.050px;">/Data Security</span>
<svg style="left:13px;top:140.39999999999998px;" width="14" height="8" viewBox="0 0 14 8"><circle cx="1.8" cy="4" r="1.1" fill="#c8c9cb"/><path d="M4 4 H12.5" stroke="#c8c9cb" stroke-width="1.4"/></svg>
<span class="t" style="left:32.5px;top:136.70px;font-size:15px;line-height:15px;color:#d4d5d7;letter-spacing:0.176px">Modify or delete the original data, making the original data ...</span>
<span class="t" style="left:12.00px;top:158.70px;font-size:13px;line-height:13px;color:#999b9e;letter-spacing:-0.050px;">/Data Security</span>
<svg style="left:13px;top:186.39999999999998px;" width="14" height="8" viewBox="0 0 14 8"><circle cx="1.8" cy="4" r="1.1" fill="#c8c9cb"/><path d="M4 4 H12.5" stroke="#c8c9cb" stroke-width="1.4"/></svg>
<span class="t" style="left:32.5px;top:182.70px;font-size:15px;line-height:15px;color:#d4d5d7;letter-spacing:0.168px">Jump in context through the breadcrumb <span style="background:#2d4a34;padding:3px 0 2px">nav</span>igation at the t...</span>
<span class="t" style="left:12.00px;top:204.70px;font-size:13px;line-height:13px;color:#999b9e;letter-spacing:-0.002px;">/Please Start Here/Content Block/Navigate in the Content Block</span>
<svg style="left:13px;top:232.39999999999998px;" width="14" height="8" viewBox="0 0 14 8"><circle cx="1.8" cy="4" r="1.1" fill="#c8c9cb"/><path d="M4 4 H12.5" stroke="#c8c9cb" stroke-width="1.4"/></svg>
<span class="t" style="left:32.5px;top:228.70px;font-size:15px;line-height:15px;color:#d4d5d7;letter-spacing:-0.007px">...lete cloud storage, causing cloud storage data to be u<span style="background:#2d4a34;padding:3px 0 2px">nav</span>ai...</span>
<span class="t" style="left:12.00px;top:250.70px;font-size:13px;line-height:13px;color:#999b9e;letter-spacing:-0.050px;">/Data Security</span>
<svg style="left:13px;top:278.4px;" width="14" height="8" viewBox="0 0 14 8"><circle cx="1.8" cy="4" r="1.1" fill="#c8c9cb"/><path d="M4 4 H12.5" stroke="#c8c9cb" stroke-width="1.4"/></svg>
<span class="t" style="left:32.5px;top:274.70px;font-size:15px;line-height:15px;color:#d4d5d7;letter-spacing:-0.080px">...nsistent) or all devices are u<span style="background:#2d4a34;padding:3px 0 2px">nav</span>ailable and the key string ca...</span>
<span class="t" style="left:12.00px;top:296.70px;font-size:13px;line-height:13px;color:#999b9e;letter-spacing:-0.873px;">/FAQ</span>
<svg style="left:13px;top:321.4px;" width="12" height="13" viewBox="0 0 12 13"><path d="M6.5 1 H4.5 A3 3 0 0 0 4.5 7.2 H6.5 M6.5 1 V12.5 M9.3 1 V12.5 M6.5 1 H11" fill="none" stroke="#d4d5d7" stroke-width="1.3"/></svg>
<span class="t" style="left:32.5px;top:320.70px;font-size:15px;line-height:15px;color:#d4d5d7;letter-spacing:0.024px">Tampering with data makes data u<span style="background:#2d4a34;padding:3px 0 2px">nav</span>ailable</span>
<span class="t" style="left:12.00px;top:342.70px;font-size:13px;line-height:13px;color:#999b9e;letter-spacing:-0.050px;">/Data Security</span>
<svg style="left:13px;top:367.4px;" width="12" height="13" viewBox="0 0 12 13"><path d="M6.5 1 H4.5 A3 3 0 0 0 4.5 7.2 H6.5 M6.5 1 V12.5 M9.3 1 V12.5 M6.5 1 H11" fill="none" stroke="#d4d5d7" stroke-width="1.3"/></svg>
<span class="t" style="left:32.5px;top:366.70px;font-size:15px;line-height:15px;color:#d4d5d7;letter-spacing:0.176px">Modify or delete the original data, making the original data ...</span>
<span class="t" style="left:12.00px;top:388.70px;font-size:13px;line-height:13px;color:#999b9e;letter-spacing:-0.050px;">/Data Security</span>
</div>
</body></html>
